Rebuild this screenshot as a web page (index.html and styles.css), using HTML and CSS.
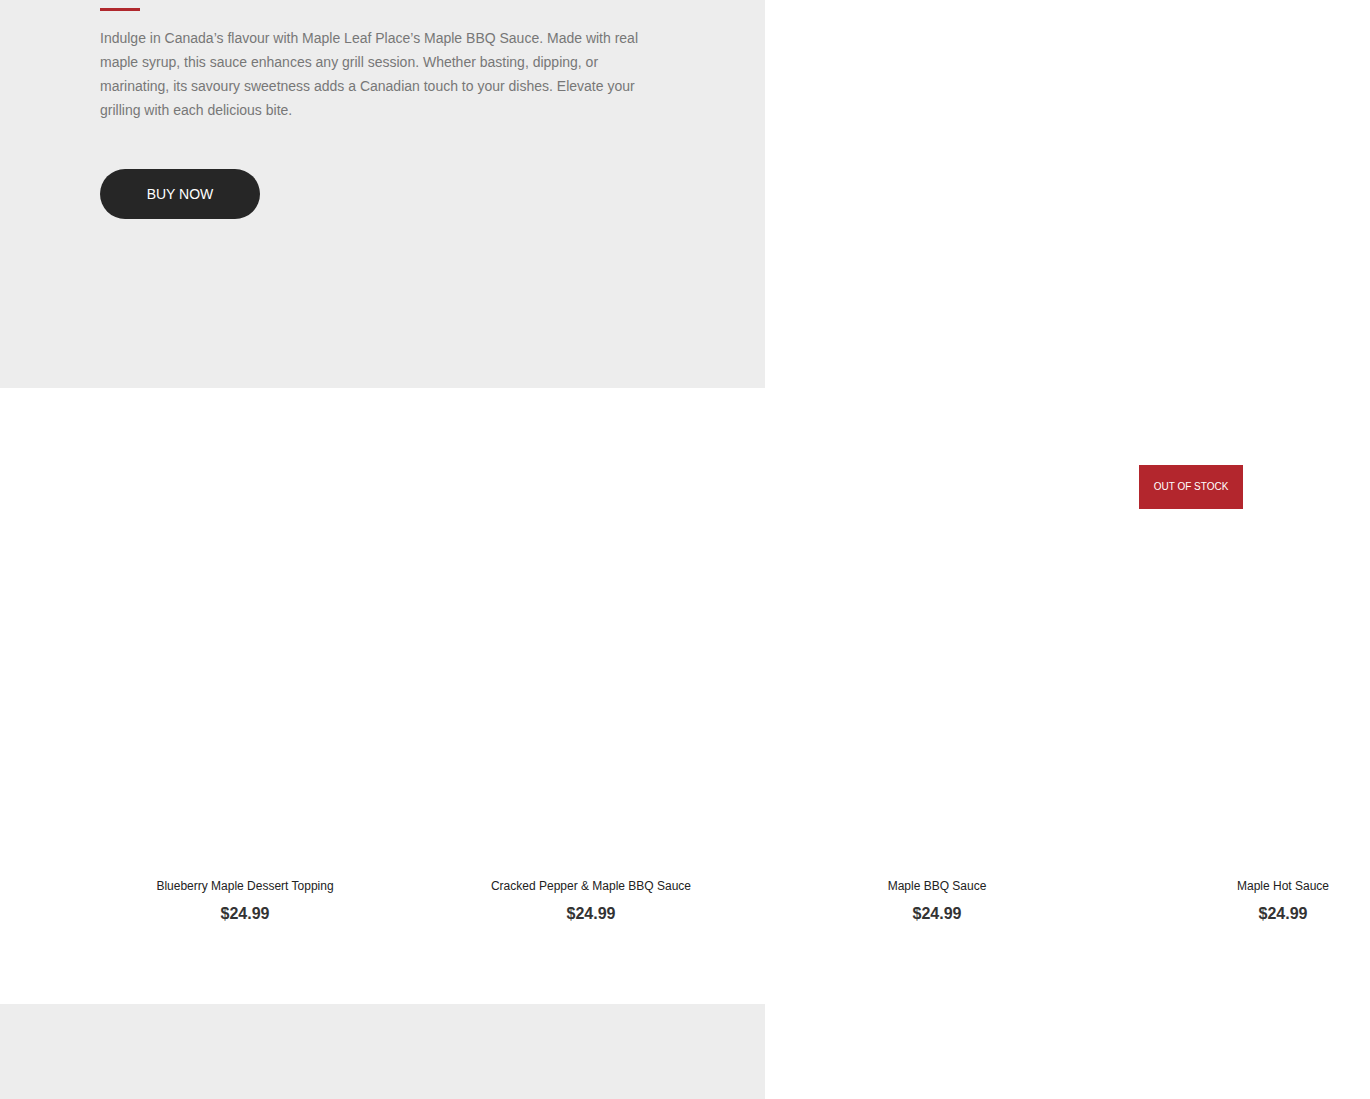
FILE: index.html
```html
<!DOCTYPE html>
<html lang="en">
<head>
<meta charset="utf-8">
<title>Maple BBQ Sauce</title>
<link rel="stylesheet" href="styles.css">
</head>
<body>
<section class="feature">
  <span class="feature-rule"></span>
  <p class="feature-text">Indulge in Canada’s flavour with Maple Leaf Place’s Maple BBQ Sauce. Made with real maple syrup, this sauce enhances any grill session. Whether basting, dipping, or marinating, its savoury sweetness adds a Canadian touch to your dishes. Elevate your grilling with each delicious bite.</p>
  <a class="btn-buy" href="#">BUY NOW</a>
</section>

<section class="products">
  <div class="product-track">
    <div class="product">
      <div class="product-media"></div>
      <h3 class="product-name">Blueberry Maple Dessert Topping</h3>
      <div class="product-price">$24.99</div>
    </div>
    <div class="product">
      <div class="product-media"></div>
      <h3 class="product-name">Cracked Pepper &amp; Maple BBQ Sauce</h3>
      <div class="product-price">$24.99</div>
    </div>
    <div class="product">
      <div class="product-media"></div>
      <h3 class="product-name">Maple BBQ Sauce</h3>
      <div class="product-price">$24.99</div>
    </div>
    <div class="product">
      <div class="product-media">
        <span class="badge-stock">OUT OF STOCK</span>
      </div>
      <h3 class="product-name">Maple Hot Sauce</h3>
      <div class="product-price">$24.99</div>
    </div>
  </div>
</section>

<section class="feature feature-next"></section>
</body>
</html>
```

FILE: styles.css
```css
html, body {
  margin: 0;
  padding: 0;
  overflow-x: hidden;
  background: #ffffff;
  font-family: "Liberation Sans", Arial, sans-serif;
}

.feature {
  box-sizing: border-box;
  width: 765px;
  height: 388px;
  background: #ededed;
  padding: 8px 0 0 100px;
  display: flex;
  flex-direction: column;
  align-items: flex-start;
}

.feature-rule {
  display: block;
  width: 40px;
  height: 3px;
  background: #b0282d;
}

.feature-text {
  margin: 15px 0 0;
  width: 545px;
  font-size: 14px;
  line-height: 24px;
  color: #777777;
}

.btn-buy {
  margin-top: 47px;
  width: 160px;
  height: 50px;
  border-radius: 25px;
  background: #262626;
  color: #ffffff;
  font-size: 14px;
  line-height: 50px;
  text-align: center;
  text-decoration: none;
}

.products {
  height: 616px;
  box-sizing: border-box;
  padding: 77px 0 0 72px;
  overflow: hidden;
}

.product-track {
  display: flex;
  width: 1384px;
}

.product {
  flex: 0 0 346px;
  text-align: center;
}

.product-media {
  position: relative;
  height: 405px;
}

.badge-stock {
  position: absolute;
  top: 0;
  left: 29px;
  width: 104px;
  height: 44px;
  line-height: 44px;
  background: #b3262d;
  color: #ffffff;
  font-size: 10px;
  text-align: center;
}

.product-name {
  margin: 8px 0 0;
  font-size: 12px;
  line-height: 16px;
  font-weight: normal;
  color: #222222;
}

.product-price {
  margin-top: 10px;
  font-size: 16px;
  line-height: 20px;
  font-weight: bold;
  color: #333333;
}

.feature-next {
  height: 95px;
}
```
